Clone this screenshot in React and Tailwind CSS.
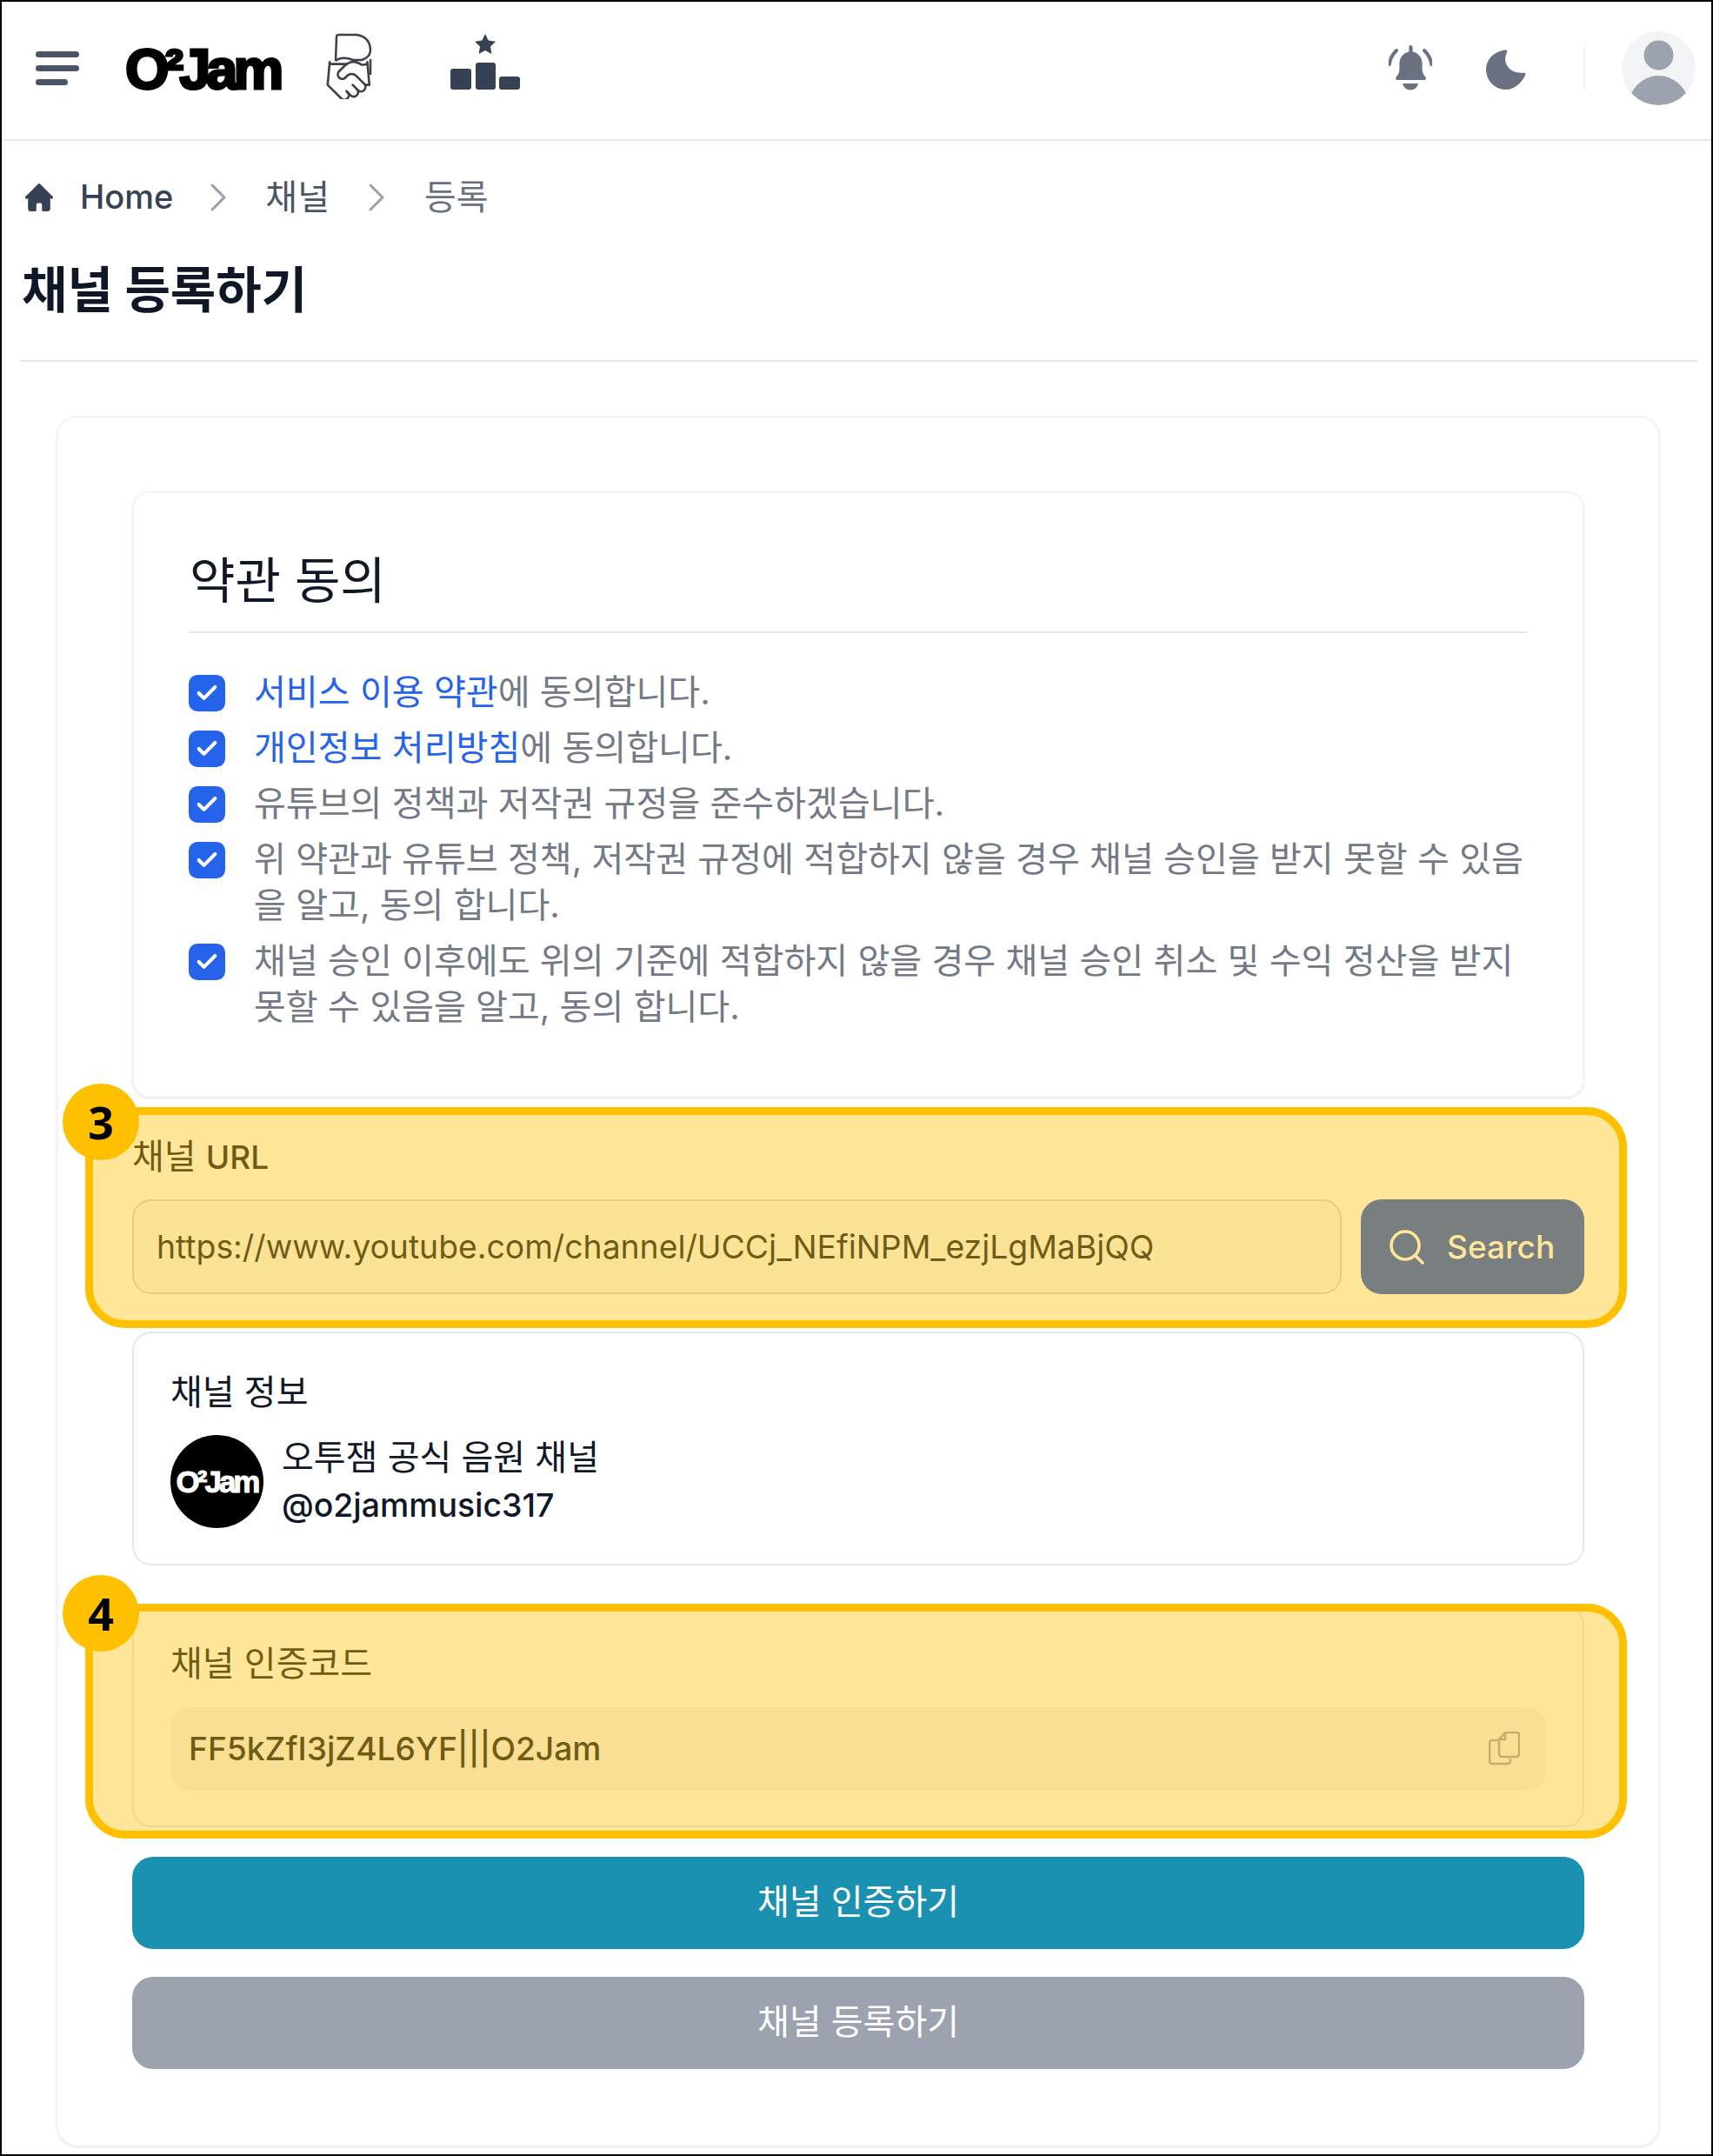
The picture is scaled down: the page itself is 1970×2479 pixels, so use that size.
import React from 'react';
import { Check, ChevronRight, Search } from 'lucide-react';

const terms = [
  { link: '서비스 이용 약관', text: '에 동의합니다.' },
  { link: '개인정보 처리방침', text: '에 동의합니다.' },
  { text: '유튜브의 정책과 저작권 규정을 준수하겠습니다.' },
  { text: '위 약관과 유튜브 정책, 저작권 규정에 적합하지 않을 경우 채널 승인을 받지 못할 수 있음을 알고, 동의 합니다.' },
  { text: '채널 승인 이후에도 위의 기준에 적합하지 않을 경우 채널 승인 취소 및 수익 정산을 받지 못할 수 있음을 알고, 동의 합니다.' },
];

const Logo = ({ className }) => (
  <div className={`font-['Liberation_Sans',sans-serif] font-bold whitespace-nowrap select-none ${className}`}>O²Jam</div>
);

const Header = () => (
  <header className="h-[160px] shrink-0 border-b-2 border-gray-200 flex items-center pl-[39px] pr-[18px]">
    <svg width="50" height="40" viewBox="0 0 50 40" className="mt-[-4px] text-gray-600" fill="currentColor">
      <rect x="0" y="0" width="50" height="7" rx="3.5" />
      <rect x="0" y="16" width="50" height="7" rx="3.5" />
      <rect x="0" y="32" width="37" height="7" rx="3.5" />
    </svg>
    <Logo className="ml-[53px] w-[184px] mt-[-4px] text-[65px] leading-[65px] tracking-[-5px] text-black [-webkit-text-stroke:3px_black]" />
    <svg width="58" height="76" viewBox="0 0 58 76" className="ml-[44px] mt-[-10px]" fill="none" stroke="#3f3f46" strokeWidth="2.5">
      <path d="M14 32 L15 4 Q15 2 18 2 L38 2 Q53 4 54 19 Q54 28 44 31 L34 31 Q24 27 17 30 L14 32 M54 30 L54 48" />
      <g transform="translate(0,26) scale(2.4)" strokeWidth="1.1" strokeLinecap="round" strokeLinejoin="round">
        <path d="M11 17l2 2a1 1 0 1 0 3-3" />
        <path d="m14 14 2.5 2.5a1 1 0 1 0 3-3l-3.88-3.88a3 3 0 0 0-4.24 0l-.88.88a1 1 0 1 1-3-3l2.81-2.81a5.79 5.79 0 0 1 7.06-.87l.47.28a2 2 0 0 0 1.42.25L21 4" />
        <path d="m21 3 1 11h-2" />
        <path d="M3 3 2 14l6.5 6.5a1 1 0 1 0 3-3" />
        <path d="M3 4h8" />
      </g>
    </svg>
    <svg width="80" height="64" viewBox="0 0 80 64" className="ml-[88px] mt-[-20px] text-gray-700" fill="currentColor">
      <path d="M40 0l3.7 7.6 8.3 1.2-6 5.800 1.400 8.400L40 19l-7.400 4 1.400-8.400-6-5.800 8.300-1.200z" />
      <rect x="0" y="40" width="24" height="24" rx="3" />
      <rect x="29" y="33" width="23" height="31" rx="3" />
      <rect x="56" y="49" width="24" height="15" rx="3" />
    </svg>
    <svg width="50" height="52" viewBox="0 0 50 52" className="ml-auto mt-[-6px] text-gray-500" fill="currentColor">
      <path d="M25 0c1.600 0 2.600 1.200 2.600 2.800v4.800c7 1.400 11 7 11 14v6c0 4 1.600 6.600 4 9.400.8 1.200.2 3-1.400 3H9.800c-1.600 0-2.200-1.800-1.400-3 2.400-2.800 4-5.400 4-9.400v-6c0-7 4-12.600 11-14V2.800C23.400 1.200 23.400 0 25 0z" />
      <path d="M16 44h18c-1 4.500-4.500 7.500-9 7.500s-8-3-9-7.500z" />
      <path d="M9 6C4 11 1.500 16 .8 22" fill="none" stroke="currentColor" strokeWidth="4" strokeLinecap="round" />
      <path d="M41 6c5 5 7.500 10 8.200 16" fill="none" stroke="currentColor" strokeWidth="4" strokeLinecap="round" />
    </svg>
    <svg width="46" height="46" viewBox="0 0 46 46" className="ml-[62px] mt-[-3px] text-gray-500" fill="currentColor">
      <path d="M21 .5c2-.6 4 .8 3 2.800-5 9-.5 23 16 23.500 3 0 5.500-.8 5.500 1.500C41.500 39 32 46 23 46 10 46 0 35.500 0 23 0 12 8 3 21 .5z" />
    </svg>
    <div className="w-[2px] h-[52px] bg-gray-100 ml-[66px] mt-[-4px]" />
    <div className="w-[85px] h-[85px] rounded-full bg-gray-100 ml-[42px] mt-[-6px] overflow-hidden">
      <svg width="85" height="85" viewBox="0 0 85 85" fill="#9ca3af">
        <circle cx="42.500" cy="27.500" r="17" />
        <path d="M11 71c7-13 19-20 31.500-20S67 58 74 71c-7 9-19 14-31.500 14S18 80 11 71z" />
      </svg>
    </div>
  </header>
);

const Breadcrumb = () => (
  <nav className="h-[132px] flex items-center pl-[27px] pb-[3px] text-[40px]">
    <svg width="32" height="32" viewBox="0 0 20 20" className="text-gray-700" fill="currentColor">
      <path d="M19.707 9.293l-2-2-7-7a1 1 0 0 0-1.414 0l-7 7-2 2a1 1 0 0 0 1.414 1.414L2 10.414V18a2 2 0 0 0 2 2h3a1 1 0 0 0 1-1v-4a1 1 0 0 1 1-1h2a1 1 0 0 1 1 1v4a1 1 0 0 0 1 1h3a2 2 0 0 0 2-2v-7.586l.293.293a1 1 0 0 0 1.414-1.414Z" />
    </svg>
    <span className="ml-[31px] text-gray-700 font-medium text-[38px]">Home</span>
    <ChevronRight className="w-[56px] h-[56px] ml-[24px] text-gray-400" strokeWidth={1.3} />
    <span className="ml-[26px] text-gray-600">채널</span>
    <ChevronRight className="w-[56px] h-[56px] ml-[26px] text-gray-400" strokeWidth={1.3} />
    <span className="ml-[27px] text-gray-500">등록</span>
  </nav>
);

const TermsCard = () => (
  <section className="border-2 border-gray-100 rounded-[20px] shadow-sm pl-[63px] pr-[64px] pt-[66px] pb-[76px]">
    <h2 className="text-[57px] leading-[70px] text-gray-900 pl-[1px] pb-[23px] border-b-2 border-gray-200">약관 동의</h2>
    <ul className="mt-[41px] flex flex-col gap-[11px]">
      {terms.map((t, i) => (
        <li key={i} className="flex items-start gap-[33px] text-[40.1px] leading-[53px] text-[#737986]">
          <span className="w-[42px] h-[42px] shrink-0 mt-[7px] rounded-[10px] bg-[#2563eb] flex items-center justify-center">
            <Check className="w-[28px] h-[28px] text-white" strokeWidth={3.5} />
          </span>
          <p>
            {t.link && <span className="text-[#2563eb]">{t.link}</span>}
            {t.text}
          </p>
        </li>
      ))}
    </ul>
  </section>
);

const UrlField = () => (
  <section className="mt-[40px]">
    <label className="block text-[40px] leading-[56px] text-gray-900">
      채널 <span className="font-medium text-[37px]">URL</span>
    </label>
    <div className="mt-[20px] flex gap-[22px]">
      <div className="flex-1 h-[109px] rounded-[22px] border-2 border-gray-300 bg-gray-50 flex items-center pl-[26px] text-[37.3px] text-gray-900">
        https://www.youtube.com/channel/UCCj_NEfiNPM_ezjLgMaBjQQ
      </div>
      <button className="w-[257px] h-[109px] rounded-[24px] bg-[#2152D3] text-white font-medium text-[37px] flex items-center pl-[29px] gap-[22px]">
        <Search className="w-[48px] h-[48px]" strokeWidth={1.8} />
        Search
      </button>
    </div>
  </section>
);

const ChannelInfo = () => (
  <section className="mt-[43px] h-[269px] border-2 border-gray-200 rounded-[22px] pl-[42px] pt-[40px]">
    <h3 className="text-[40px] leading-[56px] text-gray-900">채널 정보</h3>
    <div className="mt-[19px] flex items-center gap-[21px]">
      <div className="w-[107px] h-[107px] rounded-full bg-black flex items-center justify-center overflow-hidden">
        <Logo className="text-[35px] leading-[35px] tracking-[-3px] text-white [-webkit-text-stroke:1px_white]" />
      </div>
      <div className="text-[40px] leading-[55px] text-gray-900">
        <div>오투잼 공식 음원 채널</div>
        <div className="font-medium text-[37.4px]">@o2jammusic317</div>
      </div>
    </div>
  </section>
);

const CodeCard = () => (
  <section className="mt-[45px] h-[256px] border-2 border-gray-200 rounded-[22px] pl-[42px] pr-[42px] pt-[38px]">
    <h3 className="text-[40px] leading-[56px] text-gray-900">채널 인증코드</h3>
    <div className="mt-[22px] h-[96px] rounded-[22px] bg-gray-100 flex items-center justify-between pl-[21px] pr-[30px]">
      <span className="text-[37.2px] font-medium text-gray-900">FF5kZfI3jZ4L6YF|||O2Jam</span>
      <svg width="36" height="40" viewBox="0 0 36 40" fill="none" stroke="#9ca3af" strokeWidth="2.500" strokeLinejoin="round">
        <path d="M12 10H4a3 3 0 0 0-3 3v21a3 3 0 0 0 3 3h18a3 3 0 0 0 3-3v-3" />
        <path d="M19 1h13a3 3 0 0 1 3 3v22a3 3 0 0 1-3 3H15a3 3 0 0 1-3-3V9z" />
        <path d="M19 1v8h-7" />
      </svg>
    </div>
  </section>
);

// 스크린샷 위에 얹은 주석 박스
const Callout = ({ n, boxClass, badgeClass }) => (
  <>
    <div className={`absolute left-[96px] w-[1773px] rounded-[46px] border-[9px] border-[#FFC000] bg-[#FFC000]/40 ${boxClass}`} />
    <div className={`absolute left-[70px] w-[88px] h-[88px] rounded-full bg-[#FFC000] flex items-center justify-center text-[52px] font-bold text-black font-['Noto_Sans',sans-serif] ${badgeClass}`}>
      {n}
    </div>
  </>
);

export default function App() {
  return (
    <div className="relative w-[1970px] h-[2479px] overflow-hidden bg-white border-2 border-black font-['Inter','Noto_Sans_CJK_KR',sans-serif]">
      <Header />
      <Breadcrumb />
      <h1 className="pl-[23px] text-[57px] leading-[80px] font-bold text-gray-900">채널 등록하기</h1>
      <div className="ml-[21px] mr-[16px] mt-[40px] h-[2px] bg-gray-200" />
      <main className="ml-[63px] mr-[59px] mt-[62px] h-[1990px] border-2 border-gray-100 rounded-[24px] shadow-sm p-[85px]">
        <TermsCard />
        <UrlField />
        <ChannelInfo />
        <CodeCard />
        <button className="mt-[34px] w-full h-[106px] pb-[2px] rounded-[24px] bg-[#1B91B1] text-white text-[40px]">채널 인증하기</button>
        <button className="mt-[32px] w-full h-[106px] pb-[2px] rounded-[24px] bg-[#9ca3af] text-white text-[40px]">채널 등록하기</button>
      </main>
      <Callout n="3" boxClass="top-[1271px] h-[254px]" badgeClass="top-[1244px]" />
      <Callout n="4" boxClass="top-[1842px] h-[270px]" badgeClass="top-[1809px]" />
    </div>
  );
}
